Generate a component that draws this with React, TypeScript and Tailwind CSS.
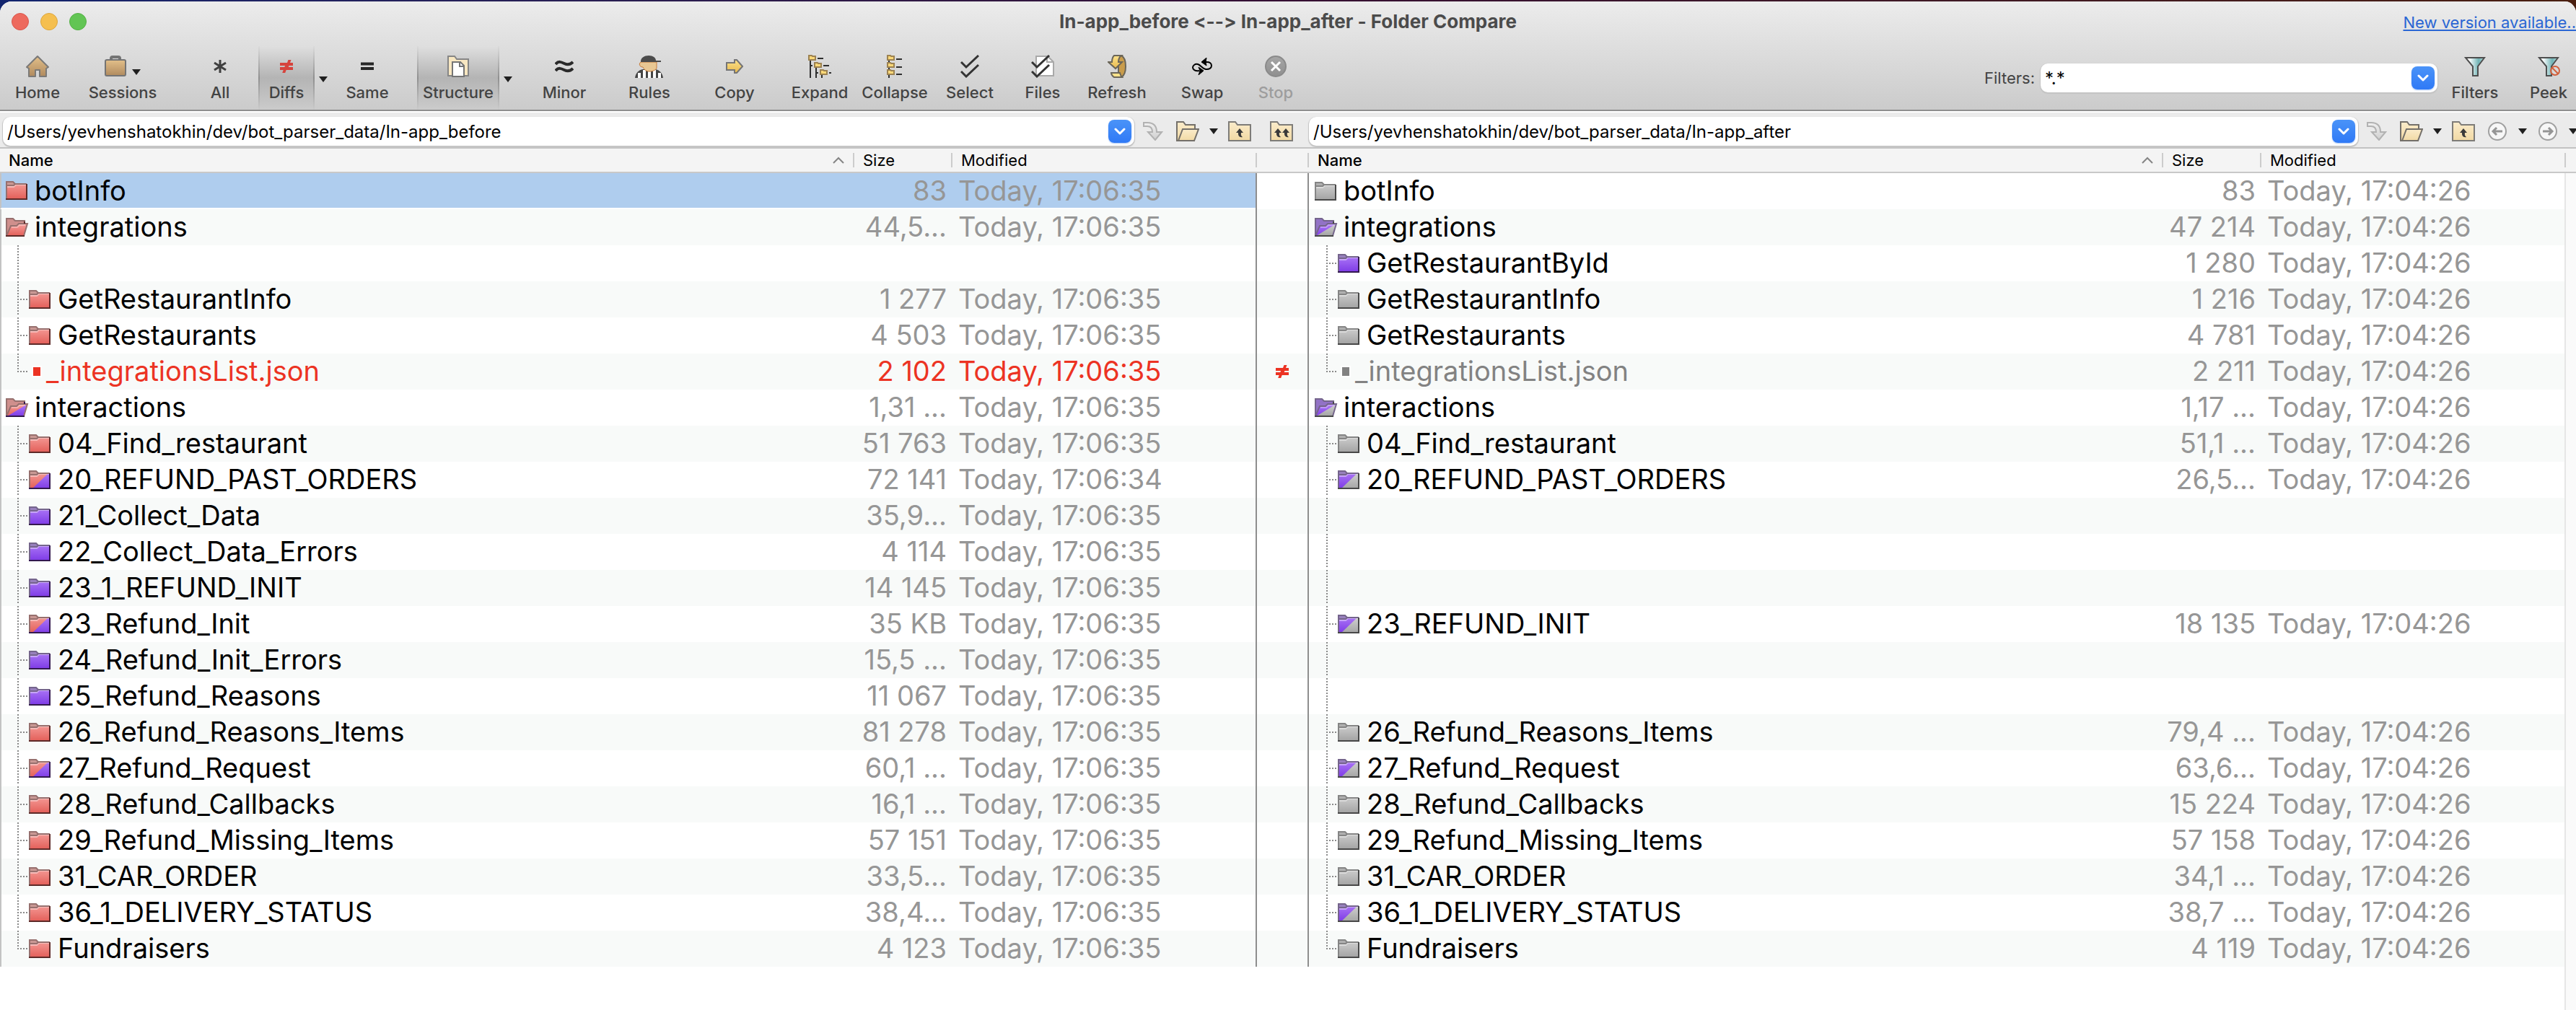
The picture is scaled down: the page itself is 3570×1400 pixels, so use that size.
import type { ReactNode } from "react";

type Tone = "red" | "purple" | "grey" | "redPurple" | "purpleGrey";
type Branch = "none" | "line" | "tee" | "end";
type Kind = "folder" | "open" | "file" | "blank";

interface Entry {
  kind: Kind;
  branch: Branch;
  name: string;
  size: string;
  time: string;
  tone: Tone;
  selected?: boolean;
}

const entry = (
  kind: Kind,
  branch: Branch,
  tone: Tone,
  name: string,
  size: string,
  time: string,
  selected = false,
): Entry => ({ kind, branch, tone, name, size, time, selected });

const blank = entry("blank", "line", "grey", "", "", "");

const L = "Today, 17:06:35";
const R = "Today, 17:04:26";

const leftEntries: Entry[] = [
  entry("folder", "none", "red", "botInfo", "83", L, true),
  entry("open", "none", "red", "integrations", "44,5...", L),
  blank,
  entry("folder", "tee", "red", "GetRestaurantInfo", "1 277", L),
  entry("folder", "tee", "red", "GetRestaurants", "4 503", L),
  entry("file", "end", "red", "_integrationsList.json", "2 102", L),
  entry("open", "none", "redPurple", "interactions", "1,31 ...", L),
  entry("folder", "tee", "red", "04_Find_restaurant", "51 763", L),
  entry("folder", "tee", "redPurple", "20_REFUND_PAST_ORDERS", "72 141", "Today, 17:06:34"),
  entry("folder", "tee", "purple", "21_Collect_Data", "35,9...", L),
  entry("folder", "tee", "purple", "22_Collect_Data_Errors", "4 114", L),
  entry("folder", "tee", "purple", "23_1_REFUND_INIT", "14 145", L),
  entry("folder", "tee", "redPurple", "23_Refund_Init", "35 KB", L),
  entry("folder", "tee", "purple", "24_Refund_Init_Errors", "15,5 ...", L),
  entry("folder", "tee", "purple", "25_Refund_Reasons", "11 067", L),
  entry("folder", "tee", "red", "26_Refund_Reasons_Items", "81 278", L),
  entry("folder", "tee", "redPurple", "27_Refund_Request", "60,1 ...", L),
  entry("folder", "tee", "red", "28_Refund_Callbacks", "16,1 ...", L),
  entry("folder", "tee", "red", "29_Refund_Missing_Items", "57 151", L),
  entry("folder", "tee", "red", "31_CAR_ORDER", "33,5...", L),
  entry("folder", "tee", "red", "36_1_DELIVERY_STATUS", "38,4...", L),
  entry("folder", "end", "red", "Fundraisers", "4 123", L),
];

const rightEntries: Entry[] = [
  entry("folder", "none", "grey", "botInfo", "83", R),
  entry("open", "none", "purpleGrey", "integrations", "47 214", R),
  entry("folder", "tee", "purple", "GetRestaurantById", "1 280", R),
  entry("folder", "tee", "grey", "GetRestaurantInfo", "1 216", R),
  entry("folder", "tee", "grey", "GetRestaurants", "4 781", R),
  entry("file", "end", "grey", "_integrationsList.json", "2 211", R),
  entry("open", "none", "purpleGrey", "interactions", "1,17 ...", R),
  entry("folder", "tee", "grey", "04_Find_restaurant", "51,1 ...", R),
  entry("folder", "tee", "purpleGrey", "20_REFUND_PAST_ORDERS", "26,5...", R),
  blank,
  blank,
  blank,
  entry("folder", "tee", "purpleGrey", "23_REFUND_INIT", "18 135", R),
  blank,
  blank,
  entry("folder", "tee", "grey", "26_Refund_Reasons_Items", "79,4 ...", R),
  entry("folder", "tee", "purpleGrey", "27_Refund_Request", "63,6...", R),
  entry("folder", "tee", "grey", "28_Refund_Callbacks", "15 224", R),
  entry("folder", "tee", "grey", "29_Refund_Missing_Items", "57 158", R),
  entry("folder", "tee", "grey", "31_CAR_ORDER", "34,1 ...", R),
  entry("folder", "tee", "purpleGrey", "36_1_DELIVERY_STATUS", "38,7 ...", R),
  entry("folder", "end", "grey", "Fundraisers", "4 119", R),
];

/* ---------- shared gradients ---------- */

function Gradients() {
  const ramp = (id: string, a: string, b: string) => (
    <linearGradient id={id} x1="0" y1="0" x2="0" y2="1">
      <stop offset="0" stopColor={a} />
      <stop offset="1" stopColor={b} />
    </linearGradient>
  );
  return (
    <svg width="0" height="0" className="absolute" aria-hidden="true">
      <defs>
        {ramp("g-red", "#f6a09c", "#e35f59")}
        {ramp("g-purple", "#b07cf8", "#7e3be6")}
        {ramp("g-grey", "#d2d2d2", "#a3a3a3")}
        {ramp("g-tan", "#e3c08a", "#b08a5e")}
        {ramp("g-gold", "#fbe28a", "#e8b94e")}
        {ramp("g-cream", "#fbeccb", "#f1d9a4")}
        {ramp("g-stop", "#a6a6a6", "#8f8f8f")}
        {ramp("g-faint", "#f0f0f0", "#cfcfcf")}
        <linearGradient id="g-funnel" x1="0" y1="0" x2="1" y2="0">
          <stop offset="0.2" stopColor="#ffffff" />
          <stop offset="0.7" stopColor="#6fb3b5" />
          <stop offset="1" stopColor="#b9dcdc" />
        </linearGradient>
      </defs>
    </svg>
  );
}

/* ---------- tree icons ---------- */

const tones: Record<Tone, { base: string; half?: string; edge: string; foot: string; tab: string; back: string }> = {
  red: { base: "url(#g-red)", edge: "#97706e", foot: "#5e2a28", tab: "#c99894", back: "#cf8f8c" },
  purple: { base: "url(#g-purple)", edge: "#75658c", foot: "#33194f", tab: "#9880bd", back: "#9272c6" },
  grey: { base: "url(#g-grey)", edge: "#858585", foot: "#484848", tab: "#b0b0b0", back: "#b0b0b0" },
  redPurple: { base: "url(#g-red)", half: "url(#g-purple)", edge: "#97706e", foot: "#33194f", tab: "#c99894", back: "#cf8f8c" },
  purpleGrey: { base: "url(#g-purple)", half: "url(#g-grey)", edge: "#75658c", foot: "#484848", tab: "#9880bd", back: "#9272c6" },
};

function FolderIcon({ tone }: { tone: Tone }) {
  const t = tones[tone];
  return (
    <svg width="30" height="26" viewBox="0 0 30 26" className="shrink-0" aria-hidden="true">
      <path d="M1 25V1h9l3 3h16v21z" fill={t.base} />
      {t.half && <path d="M4 26L28 3v22z" fill={t.half} />}
      <path d="M1 1h9l3 3-2 3H1z" fill={t.tab} />
      <path d="M2 8h9l3-3h14" fill="none" stroke="#fff" strokeOpacity="0.4" strokeWidth="2" />
      <path d="M1 25V1h9l3 3h16M2 6h9l2-2" fill="none" stroke={t.edge} strokeWidth="2" />
      <path d="M29 4v21" stroke={t.foot} strokeWidth="2" />
      <path d="M0 25h30" stroke={t.foot} strokeWidth="2" />
    </svg>
  );
}

function OpenFolderIcon({ tone }: { tone: Tone }) {
  const t = tones[tone];
  return (
    <svg width="32" height="26" viewBox="0 0 32 26" className="shrink-0" aria-hidden="true">
      <path d="M1 25V1h9l3 3h13v5L10 25z" fill={t.back} stroke={t.edge} strokeWidth="2" />
      <path d="M1 25L7 11h8l3-3h12l-5 17z" fill={t.base} />
      {t.half && <path d="M2 25L30 8l-5 17z" fill={t.half} />}
      <path d="M1 25L7 11h8l3-3h12l-5 17" fill="none" stroke={t.edge} strokeWidth="2" />
      <path d="M8 13h8l3-3h8" fill="none" stroke="#fff" strokeOpacity="0.3" strokeWidth="2" />
      <path d="M26 5v3" stroke={t.foot} strokeWidth="2" />
      <path d="M0 25h26" stroke={t.foot} strokeWidth="2" />
    </svg>
  );
}

function TreeLines({ branch, file }: { branch: Branch; file: boolean }) {
  return (
    <svg width="32" height="50" viewBox="0 0 32 50" className="shrink-0" aria-hidden="true">
      <path d={branch === "end" ? "M17 0V26" : "M17 0V46"} stroke="#8a8a8a" strokeWidth="2" strokeDasharray="2 2" />
      {branch !== "line" && (
        <path d={file ? "M20 25H32" : "M20 25H31"} stroke="#8a8a8a" strokeWidth="2" strokeDasharray="2 2" />
      )}
    </svg>
  );
}

function FileMark({ color }: { color: string }) {
  return (
    <svg width="24" height="16" viewBox="0 0 24 16" className="shrink-0" aria-hidden="true">
      <path d="M4 0h14v16H4z" fill="#fff" />
      <path d="M6 2h10v12H6z" fill={color} />
    </svg>
  );
}

/* ---------- folder tables ---------- */

function EntryRow({ item, index, edge }: { item: Entry; index: number; edge: string }) {
  const stripe = item.selected ? "bg-[#afcdee]" : index % 2 ? "bg-[#f8faf9]" : "bg-white";
  const rule = item.selected ? "border-b-2 border-b-white" : "";
  const isFile = item.kind === "file";
  const red = isFile && item.tone === "red";
  const nameColor = red ? "text-[#ec3323]" : isFile ? "text-[#828282]" : "text-black";
  const metaColor = red ? "text-[#ec3323]" : "text-[#969696]";
  return (
    <tr className={`h-[50px] ${stripe}`}>
      <td className={`p-0 ${edge} ${rule}`}>
        <div className={`flex items-center overflow-hidden ${item.selected ? "h-12" : "h-[50px]"}`}>
          {item.branch !== "none" && <TreeLines branch={item.branch} file={isFile} />}
          {item.kind === "folder" && <FolderIcon tone={item.tone} />}
          {item.kind === "open" && <OpenFolderIcon tone={item.tone} />}
          {isFile && <FileMark color={red ? "#ec3323" : "#828282"} />}
          <span
            className={`whitespace-pre ${item.selected ? "" : "pb-0.5"} ${isFile ? "" : item.kind === "open" ? "pl-2" : "pl-2.5"} ${nameColor}`}
          >
            {item.name}
          </span>
        </div>
      </td>
      <td className={`p-0 pr-1.5 text-right whitespace-pre ${item.selected ? "" : "pb-0.5"} ${metaColor} ${rule}`}>
        {item.size}
      </td>
      <td className={`p-0 pl-2.5 whitespace-pre ${item.selected ? "" : "pb-0.5"} ${metaColor} ${rule}`}>{item.time}</td>
    </tr>
  );
}

function HeaderCell({ label, className, sorted }: { label: string; className: string; sorted?: boolean }) {
  return (
    <th className="h-[34px] border-b-2 border-[#c8c8c8] bg-[#f4f4f4] p-0 text-left font-normal">
      <div className={`flex h-5 items-center justify-between border-[#cccccc] ${className}`}>
        <span className={sorted ? "font-medium" : ""}>{label}</span>
        {sorted && (
          <svg width="16" height="10" viewBox="0 0 16 10" aria-hidden="true">
            <path d="M1 9l7-7 7 7" fill="none" stroke="#858585" strokeWidth="2" />
          </svg>
        )}
      </div>
    </th>
  );
}

function FolderTable({ label, entries, edge, headPad }: { label: string; entries: Entry[]; edge: string; headPad: string }) {
  return (
    <table aria-label={label} className="w-full table-fixed border-separate border-spacing-0">
      <colgroup>
        <col />
        <col className="w-[136px]" />
        <col className="w-[422px]" />
      </colgroup>
      <thead className="text-[22px] leading-5 text-black">
        <tr>
          <HeaderCell label="Name" className={`pr-3 ${headPad}`} sorted />
          <HeaderCell label="Size" className="border-l-2 pl-3" />
          <HeaderCell label="Modified" className="border-l-2 pl-3" />
        </tr>
      </thead>
      <tbody className="text-[38px] leading-[46px]">
        {entries.map((item, i) => (
          <EntryRow key={i} item={item} index={i} edge={edge} />
        ))}
      </tbody>
    </table>
  );
}

function NotEqual({ w, h, fill }: { w: number; h: number; fill: string }) {
  return (
    <svg width={w} height={h} viewBox="0 0 18 18" preserveAspectRatio="none" aria-hidden="true">
      <path d="M0 4h10l1.500-4h4l-1.500 4h4v4h-5.500l-.8 2h6.300v4H8.700l-1.500 4h-4l1.500-4H0v-4h6.300l.8-2H0z" fill={fill} />
    </svg>
  );
}

/* ---------- small controls ---------- */

function Caret() {
  return (
    <svg width="12" height="8" viewBox="0 0 12 8" className="shrink-0" aria-hidden="true">
      <path d="M0 0h12L6 8z" fill="#1f1f1f" />
    </svg>
  );
}

function Combo({ id, label, value, className }: { id: string; label: string; value: string; className: string }) {
  return (
    <div
      className={`flex h-10 min-w-0 items-center rounded-[10px] bg-white pr-1 shadow-[0_1px_1px_1px_#c4c4c4] ${className}`}
    >
      <input
        id={id}
        aria-label={label}
        defaultValue={value}
        className="h-full min-w-0 flex-1 bg-transparent pl-1.5 text-2xl text-black outline-none"
      />
      <button
        aria-label={`${label} history`}
        className="flex size-8 items-center justify-center rounded-lg bg-linear-to-b from-[#4a93f8] to-[#2f79f6] shadow-[0_1px_2px_#a8c6f5]"
      >
        <svg width="16" height="10" viewBox="0 0 16 10" aria-hidden="true">
          <path d="M2 2l6 6 6-6" fill="none" stroke="#fff" strokeWidth="3" strokeLinecap="round" strokeLinejoin="round" />
        </svg>
      </button>
    </div>
  );
}

function IconButton({ label, children }: { label: string; children: ReactNode }) {
  return (
    <button aria-label={label} className="flex shrink-0 items-center justify-center">
      {children}
    </button>
  );
}

function GoIcon() {
  return (
    <svg width="28" height="26" viewBox="0 0 28 26" aria-hidden="true">
      <path d="M1 1h5c9 0 13 5 13 13h7L17 25 7 14h6c0-5-2-8-7-8H1z" fill="url(#g-faint)" stroke="#b2b2b2" strokeWidth="2" />
    </svg>
  );
}

function BrowseIcon() {
  return (
    <svg width="32" height="28" viewBox="0 0 32 28" aria-hidden="true">
      <path d="M1 27V1h9l3 4h13v6" fill="url(#g-cream)" stroke="#74706a" strokeWidth="2" />
      <path d="M3 27L9 11h22l-6 16z" fill="url(#g-cream)" stroke="#74706a" strokeWidth="2" />
      <path d="M0 27h26" stroke="#74706a" strokeWidth="2" />
    </svg>
  );
}

function UpFolderIcon({ twice }: { twice?: boolean }) {
  const arrow = "M0-6L5 0H2C1.500 3 2 4.500 4 6C0 7-2.500 4-2 0H-5z";
  return (
    <svg width="32" height="28" viewBox="0 0 32 28" aria-hidden="true">
      <path d="M1 27V1h9l3 4h18v22z" fill="url(#g-cream)" stroke="#7e7c78" strokeWidth="2" />
      {twice ? (
        <>
          <path d={arrow} transform="translate(11 16)" fill="#3a3a3a" />
          <path d={arrow} transform="translate(22 16)" fill="#3a3a3a" />
        </>
      ) : (
        <path d={arrow} transform="translate(16 16)" fill="#3a3a3a" />
      )}
    </svg>
  );
}

function RoundArrow({ flip }: { flip?: boolean }) {
  return (
    <svg width="26" height="26" viewBox="0 0 26 26" aria-hidden="true">
      <circle cx="13" cy="13" r="12" fill="#f7f7f7" stroke="#a0a0a0" strokeWidth="2" />
      <path
        d={flip ? "M6 13h13M14 8l5 5-5 5" : "M20 13H7M12 8l-5 5 5 5"}
        fill="none"
        stroke="#959595"
        strokeWidth="3"
      />
    </svg>
  );
}

/* ---------- toolbar ---------- */

function Tool({
  label,
  width,
  active,
  disabled,
  menu,
  children,
}: {
  label: string;
  width: string;
  active?: boolean;
  disabled?: boolean;
  menu?: boolean;
  children: ReactNode;
}) {
  return (
    <button
      disabled={disabled}
      className={`flex h-full shrink-0 flex-col items-center pt-3 ${width} ${
        active
          ? "border-x-2 border-[#a6a6a6] bg-linear-to-b from-[#dfdfdf] via-[#b4b4b4] via-50% to-[#cbcbcb] [border-image:linear-gradient(#dcdcdc,#909090_50%,#cbcbcb)_1]"
          : ""
      }`}
    >
      <span className="flex h-8 items-center justify-center">
        {children}
        {menu && (
          <span className="mt-4 ml-2">
            <Caret />
          </span>
        )}
      </span>
      <span className={`mt-1.5 text-[22px] leading-7 font-medium ${disabled ? "text-[#9d9d9d]" : "text-[#434343]"}`}>
        {label}
      </span>
    </button>
  );
}

function MenuCaret({ label }: { label: string }) {
  return (
    <button aria-label={label} className="flex h-full w-6 shrink-0 items-center justify-center pt-1">
      <Caret />
    </button>
  );
}

function HomeIcon() {
  return (
    <svg width="32" height="32" viewBox="0 0 32 32" aria-hidden="true">
      <path
        d="M16 2L1 17l3 2v11h9v-9h6v9h9V19l3-2z"
        fill="url(#g-tan)"
        stroke="#7b7a78"
        strokeWidth="2"
        strokeLinejoin="round"
      />
    </svg>
  );
}

function SessionsIcon() {
  return (
    <svg width="30" height="30" viewBox="0 0 30 30" aria-hidden="true">
      <path d="M9 6V4a2 2 0 0 1 2-2h8a2 2 0 0 1 2 2v2" fill="none" stroke="#747474" strokeWidth="4" />
      <rect x="1" y="6" width="28" height="22" rx="2" fill="url(#g-tan)" stroke="#747474" strokeWidth="2" />
    </svg>
  );
}

function AllIcon() {
  return (
    <svg width="20" height="20" viewBox="0 0 20 20" aria-hidden="true">
      <path d="M10 1v18M2 5l16 10M2 15L18 5" stroke="#3f3f3f" strokeWidth="3" />
    </svg>
  );
}

function SameIcon() {
  return (
    <svg width="18" height="12" viewBox="0 0 18 12" aria-hidden="true">
      <path d="M0 2.500h18M0 9h18" stroke="#262626" strokeWidth="4" />
    </svg>
  );
}

function StructureIcon() {
  return (
    <svg width="30" height="32" viewBox="0 0 30 32" aria-hidden="true">
      <path d="M1 29V2h9l3 4h16v23z" fill="#f8e7c1" stroke="#868686" strokeWidth="2" />
      <path d="M7 10h11l5 5v15H7z" fill="#fff" stroke="#757575" strokeWidth="2" />
      <path d="M17 10v6h6" fill="none" stroke="#757575" strokeWidth="2" />
    </svg>
  );
}

function MinorIcon() {
  return (
    <svg width="26" height="18" viewBox="0 0 26 18" aria-hidden="true">
      <path d="M1 6c4-5 8-3 12-1s8 2 12-2M1 15c4-5 8-3 12-1s8 2 12-2" fill="none" stroke="#2a2a2a" strokeWidth="4" />
    </svg>
  );
}

function RulesIcon() {
  return (
    <svg width="40" height="32" viewBox="0 0 40 32" aria-hidden="true">
      <path d="M0 32c1-7 5-11 11-12h17c6 1 10 5 11 12z" fill="#454545" />
      <path d="M6 32v-7M13 32V21M20 32v-9M27 32V21M34 32v-7" stroke="#fff" strokeWidth="4" />
      <path d="M8 10h22v8c0 3-6 5-10 5s-7-2-9-6c-5 0-6-5-3-7z" fill="#e8c793" stroke="#c77b3a" strokeWidth="1" />
      <path d="M8 9c0-5 5-8 11-8s10 3 10 7h7v2H8z" fill="#4b4b4b" />
    </svg>
  );
}

function CopyIcon() {
  return (
    <svg width="24" height="20" viewBox="0 0 24 20" aria-hidden="true">
      <path d="M1 5h11V1h3l8 9-8 9h-3v-4H1z" fill="url(#g-gold)" stroke="#757575" strokeWidth="2" />
    </svg>
  );
}

const miniFolder = "M1 1h4l1 1h4v5H1z";

function ExpandIcon() {
  return (
    <svg width="32" height="32" viewBox="0 0 32 32" aria-hidden="true">
      <path d="M3 6v26M3 15h3M11 16v16M11 25h3M19 26v6M13 5h8M21 15h8M29 25h3" stroke="#2f2f2f" strokeWidth="2" />
      <g fill="#fbd878" stroke="#9c8251" strokeWidth="2">
        <path d={miniFolder} />
        <path d={miniFolder} transform="translate(8 10)" />
        <path d={miniFolder} transform="translate(16 20)" />
      </g>
    </svg>
  );
}

function CollapseIcon() {
  return (
    <svg width="22" height="32" viewBox="0 0 22 32" aria-hidden="true">
      <path d="M3 6v26M13 6h8M13 17h8M13 27h8" stroke="#2f2f2f" strokeWidth="2" />
      <g fill="#fbd878" stroke="#9c8251" strokeWidth="2">
        <path d={miniFolder} />
        <path d={miniFolder} transform="translate(0 10)" />
        <path d={miniFolder} transform="translate(0 20)" />
      </g>
    </svg>
  );
}

function Checks() {
  return <path d="M1 10l7 7L25 1M1 23l7 7L25 14" fill="none" stroke="#333" strokeWidth="3" />;
}

function SelectIcon() {
  return (
    <svg width="26" height="32" viewBox="0 0 26 32" aria-hidden="true">
      <Checks />
    </svg>
  );
}

function FilesIcon() {
  return (
    <svg width="32" height="32" viewBox="0 0 32 32" aria-hidden="true">
      <path d="M7 2h16l8 8v19H7z" fill="#fff" stroke="#a9a9a9" strokeWidth="2" />
      <path d="M22 2v8h9" fill="none" stroke="#a9a9a9" strokeWidth="2" />
      <Checks />
    </svg>
  );
}

function RefreshIcon() {
  return (
    <svg width="26" height="32" viewBox="0 0 26 32" aria-hidden="true">
      <path d="M14 1h5c4 2 6 8 6 15s-2 13-6 15h-4V6z" fill="#c99c4b" stroke="#6b6659" strokeWidth="2" />
      <path d="M9 1h10c-3 2-4 5-4 9h5l-9 9-10-9h5c0-4 1-7 3-9z" fill="url(#g-gold)" stroke="#6b6659" strokeWidth="2" />
      <path d="M5 25h12c1 3 1 4 3 6H9c-2-1-4-4-4-6z" fill="#fbe28a" stroke="#6b6659" strokeWidth="2" />
    </svg>
  );
}

function SwapIcon() {
  return (
    <svg width="28" height="24" viewBox="0 0 28 24" aria-hidden="true">
      <path d="M10 18C4 19 1 16 1 13.500S4 8 8 9c4 1 6 6 11 7 5 .5 8-2 8-5s-2-5.500-8-5" fill="none" stroke="#000" strokeWidth="2" />
      <path d="M20 0l-7 6 7 5-1-5zM9 24l7-6-7-5 2 5z" fill="#000" stroke="#000" strokeWidth="1" />
    </svg>
  );
}

function StopIcon() {
  return (
    <svg width="30" height="30" viewBox="0 0 30 30" aria-hidden="true">
      <circle cx="15" cy="15" r="14" fill="url(#g-stop)" stroke="#8a8a8a" strokeWidth="2" />
      <path d="M9 9l12 12M21 9L9 21" stroke="#fff" strokeWidth="3" />
    </svg>
  );
}

function FunnelIcon({ blocked }: { blocked?: boolean }) {
  return (
    <svg width="32" height="28" viewBox="0 0 32 28" aria-hidden="true">
      <path d="M3 2h26l-9 12v13h-7V14z" fill="url(#g-funnel)" stroke="#4e4e4e" strokeWidth="2" />
      {blocked && (
        <g fill="none" stroke="#d2603c" strokeWidth="2">
          <circle cx="25" cy="20" r="6" fill="#dadada" fillOpacity="0.7" />
          <path d="M21 16l8 8" />
        </g>
      )}
    </svg>
  );
}

function TitleBar() {
  return (
    <div className="grid h-[62px] grid-cols-[1fr_auto_1fr] items-center pb-2">
      <div className="flex gap-4 pt-0.5 pl-4">
        <button aria-label="Close" className="h-6 w-6 rounded-full border border-[#d9564c] bg-[#ed6a5e]" />
        <button aria-label="Minimise" className="h-6 w-6 rounded-full border border-[#dba53e] bg-[#f5bf4f]" />
        <button aria-label="Zoom" className="h-6 w-6 rounded-full border border-[#54b045] bg-[#62c554]" />
      </div>
      <h1 className="text-[26px] font-bold whitespace-pre text-[#4b4b4b] [font-feature-settings:'calt'_0]">
        {"In-app_before <--> In-app_after - Folder Compare"}
      </h1>
      <div className="flex justify-end pt-1">
        <a href="#update" className="text-[22px] leading-7 whitespace-nowrap text-[#2a66d4] underline">
          New version available..
        </a>
      </div>
    </div>
  );
}

function Toolbar() {
  return (
    <div className="flex h-[88px]">
      <Tool label="Home" width="w-[104px]">
        <HomeIcon />
      </Tool>
      <Tool label="Sessions" width="w-[132px] mr-[34px]" menu>
        <SessionsIcon />
      </Tool>
      <Tool label="All" width="w-[70px] mr-[18px]">
        <AllIcon />
      </Tool>
      <Tool label="Diffs" width="w-[78px]" active>
        <NotEqual w={18} h={18} fill="#d6433c" />
      </Tool>
      <MenuCaret label="Diffs options" />
      <Tool label="Same" width="w-[98px] mr-5">
        <SameIcon />
      </Tool>
      <Tool label="Structure" width="w-[114px]" active>
        <StructureIcon />
      </Tool>
      <MenuCaret label="Structure options" />
      <Tool label="Minor" width="w-[100px] mx-4">
        <MinorIcon />
      </Tool>
      <Tool label="Rules" width="w-[104px]">
        <RulesIcon />
      </Tool>
      <Tool label="Copy" width="w-[100px] mx-4">
        <CopyIcon />
      </Tool>
      <Tool label="Expand" width="w-[104px]">
        <ExpandIcon />
      </Tool>
      <Tool label="Collapse" width="w-[104px]">
        <CollapseIcon />
      </Tool>
      <Tool label="Select" width="w-[104px]">
        <SelectIcon />
      </Tool>
      <Tool label="Files" width="w-[98px]">
        <FilesIcon />
      </Tool>
      <Tool label="Refresh" width="w-[108px] mr-4">
        <RefreshIcon />
      </Tool>
      <Tool label="Swap" width="w-[96px]">
        <SwapIcon />
      </Tool>
      <Tool label="Stop" width="w-[108px]" disabled>
        <StopIcon />
      </Tool>
      <div className="ml-auto flex">
        <div className="flex items-center gap-2">
          <label htmlFor="filters" className="text-[22px] text-[#434343]">
            Filters:
          </label>
          <Combo id="filters" label="Filters" value="*.*" className="w-[550px]" />
        </div>
        <Tool label="Filters" width="w-[104px]">
          <FunnelIcon />
        </Tool>
        <Tool label="Peek" width="w-[100px] -mr-3">
          <FunnelIcon blocked />
        </Tool>
      </div>
    </div>
  );
}

/* ---------- path bars ---------- */

function PathBars() {
  return (
    <div className="flex h-[52px] items-center overflow-hidden border-t-2 border-b-2 border-t-white border-b-[#c3c3c3] bg-[#ebebeb] pt-1">
      <div className="flex min-w-0 flex-1 items-center pl-1">
        <Combo id="left-path" label="Left folder" value="/Users/yevhenshatokhin/dev/bot_parser_data/In-app_before" className="flex-1" />
        <div className="flex w-[172px] shrink-0 items-center pl-3">
          <IconButton label="Load left folder"><GoIcon /></IconButton>
          <span className="ml-[18px] flex"><IconButton label="Browse left folder"><BrowseIcon /></IconButton></span>
          <span className="mx-3.5 flex"><IconButton label="Left recent folders"><Caret /></IconButton></span>
          <IconButton label="Left parent folder"><UpFolderIcon /></IconButton>
        </div>
      </div>
      <div className="flex w-[70px] shrink-0 justify-center pr-1.5">
        <IconButton label="Both parent folders"><UpFolderIcon twice /></IconButton>
      </div>
      <div className="mr-4 flex min-w-0 flex-1 items-center">
        <Combo id="right-path" label="Right folder" value="/Users/yevhenshatokhin/dev/bot_parser_data/In-app_after" className="flex-1" />
        <div className="flex w-[286px] shrink-0 items-center pl-3">
          <IconButton label="Load right folder"><GoIcon /></IconButton>
          <span className="ml-[18px] flex"><IconButton label="Browse right folder"><BrowseIcon /></IconButton></span>
          <span className="mx-3.5 flex"><IconButton label="Right recent folders"><Caret /></IconButton></span>
          <IconButton label="Right parent folder"><UpFolderIcon /></IconButton>
          <span className="ml-[18px] flex"><IconButton label="Back"><RoundArrow /></IconButton></span>
          <span className="mx-4 flex"><IconButton label="Back history"><Caret /></IconButton></span>
          <IconButton label="Forward"><RoundArrow flip /></IconButton>
          <span className="ml-4 flex"><IconButton label="Forward history"><Caret /></IconButton></span>
        </div>
      </div>
    </div>
  );
}

function CenterColumn() {
  return (
    <div className="flex w-[74px] shrink-0 flex-col">
      <div className="flex h-[34px] items-start border-b-2 border-[#c8c8c8] bg-[#f4f4f4] pt-1.5">
        <div className="h-5 w-full border-x-2 border-[#cccccc]" />
      </div>
      {leftEntries.map((item, i) => (
        <div
          key={i}
          className={`flex h-[50px] items-center justify-center border-x-2 border-[#8e8e8e] ${i % 2 ? "bg-[#f8faf9]" : "bg-white"}`}
        >
          {item.kind === "file" && <NotEqual w={18} h={18} fill="#ec3323" />}
        </div>
      ))}
    </div>
  );
}

export default function App() {
  return (
    <div className="flex min-h-screen flex-col bg-linear-to-r from-[#12256e] via-[#350f33] to-[#4a1f10] pt-0.5 font-[Inter,'Liberation_Sans',sans-serif]">
      <Gradients />
      <div className="flex flex-1 flex-col overflow-hidden rounded-t-2xl bg-white">
        <header className="border-b-2 border-[#8f8f8f] bg-linear-to-b from-[#ececec] to-[#cbcbcb]">
          <TitleBar />
          <Toolbar />
        </header>
        <PathBars />
        <main className="flex flex-1">
          <section className="min-w-0 flex-1">
            <FolderTable
              label="In-app_before"
              entries={leftEntries}
              edge="border-l-2 border-l-[#c3c3c3] pl-1.5"
              headPad="pl-3"
            />
          </section>
          <CenterColumn />
          <section className="min-w-0 flex-1">
            <FolderTable label="In-app_after" entries={rightEntries} edge="pl-2" headPad="pl-3" />
          </section>
          <div className="flex w-4 shrink-0 flex-col">
            <div className="h-[34px] border-b-2 border-[#c8c8c8] bg-[#f4f4f4] pt-1.5">
              <div className="h-5 border-l-2 border-[#cccccc]" />
            </div>
            <div className="flex-1 border-l-2 border-[#e6e6e6] bg-[#fafafa]" />
          </div>
        </main>
      </div>
    </div>
  );
}
